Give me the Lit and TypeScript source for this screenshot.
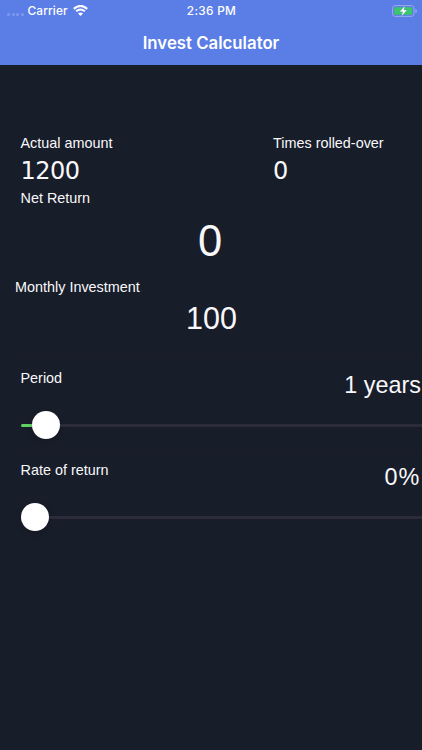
import { LitElement, html, css } from "lit";
import { customElement, property } from "lit/decorators.js";

@customElement("status-bar")
class StatusBar extends LitElement {
  static styles = css`
    :host { display: grid; grid-template-columns: 1fr auto 1fr; align-items: center; height: 20px; padding: 0 4px 0 6px;
      color: #fff; font: 500 11.8px/20px Inter, "Liberation Sans", sans-serif; letter-spacing: 0.15px; }
    .left { display: flex; align-items: center; }
    .dots { display: flex; gap: 1.5px; margin: 8px 4px 0 1px; }
    .dot { width: 3px; height: 3px; border-radius: 50%; background: #8199ee; }
    .text { padding-top: 1px; }
    .wifi { margin-left: 5px; }
    .time { letter-spacing: 0.3px; padding: 1px 1px 0 0; }
    .battery { justify-self: end; }
    svg { display: block; }
  `;
  render() {
    return html`
      <div class="left">
        <div class="dots">${[0, 1, 2, 3].map(() => html`<span class="dot"></span>`)}</div>
        <span class="text">Carrier</span>
        <svg class="wifi" width="15" height="11" viewBox="0 0 15 11" fill="none" stroke="#fff">
          <path d="M.8 3.9Q7.5-2 14.2 3.9" stroke-width="2.1" />
          <path d="M3.1 6.3Q7.5 2.6 11.9 6.3" stroke-width="2" />
          <path d="M7.5 11 5 8.4Q7.5 6.5 10 8.4Z" fill="#fff" stroke="none" />
        </svg>
      </div>
      <span class="time">2:36 PM</span>
      <svg class="battery" width="26" height="12" viewBox="0 0 26 12">
        <rect x=".6" y=".6" width="21.4" height="10.8" rx="2.6" fill="none" stroke="#9aabef" />
        <rect x="2.2" y="2.2" width="18" height="7.6" rx="1.3" fill="#3bc769" />
        <path d="M23.4 4v4q1.5-.7 1.5-2T23.4 4Z" fill="#9aabef" />
        <path d="M12.9 .7 7.6 6.8h3.1L9.5 11.3l5.6-6.3h-3.2Z" fill="#fff" stroke="#5b7de6" stroke-width=".3" />
      </svg>
    `;
  }
}

@customElement("slider-row")
class SliderRow extends LitElement {
  static styles = css`
    :host { display: block; height: 92px; font-family: "Liberation Sans", Arial, sans-serif; }
    .head { display: flex; justify-content: space-between; align-items: flex-start; height: 44px; margin-left: 20.5px;
      padding: 9px 1px 0 0; border-top: 1px solid #1c1e2b; box-sizing: border-box; }
    .name { font-size: 14.4px; line-height: 20px; }
    .value { font-size: 23.4px; line-height: 30px; margin-top: 2px; }
    .percent { letter-spacing: 1.1px; padding-right: 0.5px; }
    .slider { display: flex; align-items: center; height: 46px; margin-left: 21px; }
    .fill { height: 3px; border-radius: 2px 0 0 2px; background: #62d463; margin-top: 1px; }
    .thumb { flex: none; width: 28px; height: 28px; border-radius: 50%; background: #fff; box-shadow: 0 2px 6px rgba(0,0,0,.2); }
    .rest { flex: 1; height: 3px; background: #2b2b3a; margin-top: 1px; }
  `;
  @property() name = "";
  @property() value = "";
  @property({ type: Number }) offset = 0;
  render() {
    const percent = this.value.endsWith("%") ? "percent" : "";
    return html`
      <div class="head"><span class="name">${this.name}</span><span class="value ${percent}">${this.value}</span></div>
      <div class="slider">
        <span class="fill" style="width:${this.offset}px"></span><span class="thumb"></span><span class="rest"></span>
      </div>
    `;
  }
}

@customElement("app-root")
class AppRoot extends LitElement {
  static styles = css`
    :host { display: block; height: 750px; overflow: hidden; background: #181d2a; color: #f8f8fa;
      font-family: "Liberation Sans", Arial, sans-serif; }
    header { height: 65px; background: #5b7de6; }
    .title { color: #fff; text-align: center; font: 600 16.8px/24px Inter, "Liberation Sans", sans-serif; margin-top: 11px; }
    .summary { display: grid; grid-template-columns: 252.5px 1fr; padding: 68px 0 0 20.5px; }
    .label { font-size: 14.4px; line-height: 20px; }
    .stat { font: 24px/30px "DejaVu Sans", Verdana, sans-serif; margin-top: 3px; letter-spacing: -0.5px; }
    .net { padding-left: 20.5px; margin-top: 2px; }
    .total { font-size: 43.5px; line-height: 50px; text-align: center; margin-top: 8px; padding-right: 2px; }
    .monthly { padding-left: 15px; margin-top: 11px; }
    .amount { font-size: 30.5px; line-height: 36px; text-align: center; margin: 3px 0 22px; padding-left: 1px; }
  `;
  render() {
    return html`
      <header><status-bar></status-bar><div class="title">Invest Calculator</div></header>
      <main>
        <div class="summary">
          <div><div class="label">Actual amount</div><div class="stat">1200</div></div>
          <div><div class="label">Times rolled-over</div><div class="stat">0</div></div>
        </div>
        <div class="label net">Net Return</div>
        <div class="total">0</div>
        <div class="label monthly">Monthly Investment</div>
        <div class="amount">100</div>
        <slider-row name="Period" value="1 years" offset="10.5"></slider-row>
        <slider-row name="Rate of return" value="0%" offset="0"></slider-row>
      </main>
    `;
  }
}
